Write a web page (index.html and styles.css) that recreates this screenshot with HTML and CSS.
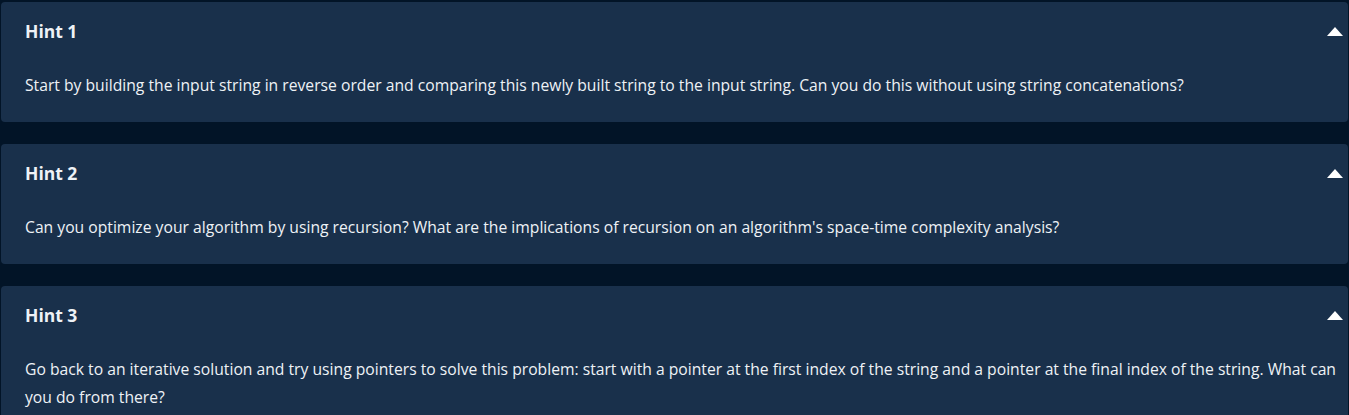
FILE: index.html
```html
<!DOCTYPE html>
<html>
<head>
<meta charset="utf-8">
<link rel="stylesheet" href="styles.css">
</head>
<body>
<div class="hints">
  <section class="hint">
    <div class="hint-head">
      <h3 class="hint-title">Hint 1</h3>
      <span class="caret"></span>
    </div>
    <p class="hint-body">Start by building the input string in reverse order and comparing this newly built string to the input string. Can you do this without using string concatenations?</p>
  </section>
  <section class="hint">
    <div class="hint-head">
      <h3 class="hint-title">Hint 2</h3>
      <span class="caret"></span>
    </div>
    <p class="hint-body">Can you optimize your algorithm by using recursion? What are the implications of recursion on an algorithm's space-time complexity analysis?</p>
  </section>
  <section class="hint">
    <div class="hint-head">
      <h3 class="hint-title">Hint 3</h3>
      <span class="caret"></span>
    </div>
    <p class="hint-body">Go back to an iterative solution and try using pointers to solve this problem: start with a pointer at the first index of the string and a pointer at the final index of the string. What can you do from there?</p>
  </section>
</div>
</body>
</html>
```
FILE: styles.css
```css
html, body {
  margin: 0;
  padding: 0;
  background: #021427;
  height: 100%;
  overflow: hidden;
}
.hints {
  display: flex;
  flex-direction: column;
  gap: 22px;
  padding: 2px 1px 0 1px;
  font-family: "Open Sans", "Noto Sans", sans-serif;
  color: #eef2f6;
}
.hint {
  background: #19304b;
  border-radius: 4px;
  padding: 0 4px 0 24px;
}
.hint-head {
  display: flex;
  align-items: center;
  justify-content: space-between;
  padding-top: 17px;
  height: 24px;
}
.hint-title {
  margin: 0;
  font-size: 17.5px;
  font-weight: 700;
  line-height: 24px;
}
.caret {
  width: 0;
  height: 0;
  border-left: 8px solid transparent;
  border-right: 8px solid transparent;
  border-bottom: 9px solid #ffffff;
  margin-right: 1px;
}
.hint-body {
  margin: 0;
  padding: 28px 0 23px 0;
  font-size: 15.7px;
  line-height: 28px;
}
```
